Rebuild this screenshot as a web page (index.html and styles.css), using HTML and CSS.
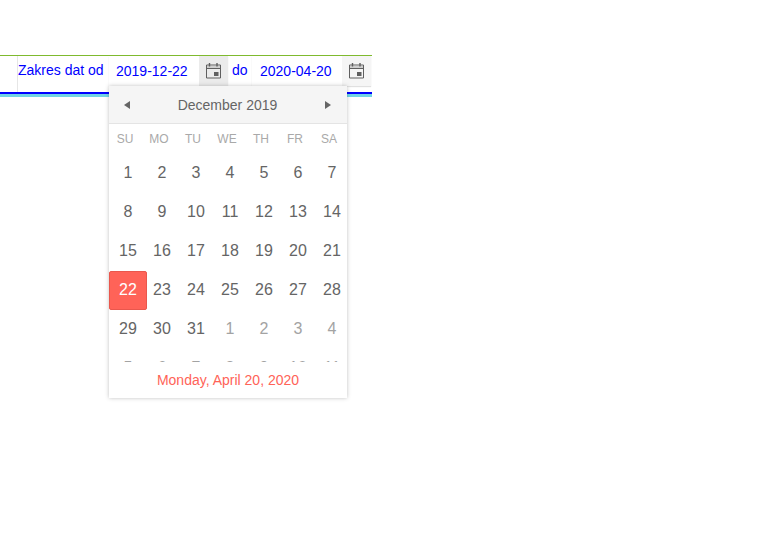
FILE: index.html
```html
<!DOCTYPE html>
<html lang="pl">
<head>
<meta charset="utf-8">
<title>Zakres dat</title>
<link rel="stylesheet" href="styles.css">
</head>
<body>
<div class="toolbar">
  <div class="spacer"></div>
  <span class="label first">Zakres dat od</span>
  <div class="field open">
    <span class="value">2019-12-22</span>
    <span class="icon-btn active">
      <svg class="cal" width="15" height="16" viewBox="0 0 15 16"><path d="M.5 2h14v13H.5z" fill="none" stroke="#5f5f5f"/><path d="M1 3h13v2H1z" fill="#cfcfcf"/><path d="M1 5.500h13" stroke="#5f5f5f"/><path d="M3.500 0v3.500M11 0v3.500" stroke="#5f5f5f" stroke-width="1.400"/><rect x="8" y="9" width="4.500" height="4" fill="#5f5f5f"/></svg>
    </span>
    <div class="popup">
      <div class="head">
        <span class="arrow left"></span>
        <span class="title">December 2019</span>
        <span class="arrow right"></span>
      </div>
      <div class="weekdays">
        <span>SU</span><span>MO</span><span>TU</span><span>WE</span><span>TH</span><span>FR</span><span>SA</span>
      </div>
      <div class="days-clip">
        <div class="days">
          <span>1</span><span>2</span><span>3</span><span>4</span><span>5</span><span>6</span><span>7</span>
          <span>8</span><span>9</span><span>10</span><span>11</span><span>12</span><span>13</span><span>14</span>
          <span>15</span><span>16</span><span>17</span><span>18</span><span>19</span><span>20</span><span>21</span>
          <span class="selected">22</span><span>23</span><span>24</span><span>25</span><span>26</span><span>27</span><span>28</span>
          <span>29</span><span>30</span><span>31</span><span class="other">1</span><span class="other">2</span><span class="other">3</span><span class="other">4</span>
          <span class="other">5</span><span class="other">6</span><span class="other">7</span><span class="other">8</span><span class="other">9</span><span class="other">10</span><span class="other">11</span>
        </div>
      </div>
      <div class="today">Monday, April 20, 2020</div>
    </div>
  </div>
  <span class="label second">do</span>
  <div class="field">
    <span class="value">2020-04-20</span>
    <span class="icon-btn">
      <svg class="cal" width="15" height="16" viewBox="0 0 15 16"><path d="M.5 2h14v13H.5z" fill="none" stroke="#5f5f5f"/><path d="M1 3h13v2H1z" fill="#cfcfcf"/><path d="M1 5.500h13" stroke="#5f5f5f"/><path d="M3.500 0v3.500M11 0v3.500" stroke="#5f5f5f" stroke-width="1.400"/><rect x="8" y="9" width="4.500" height="4" fill="#5f5f5f"/></svg>
    </span>
  </div>
</div>
</body>
</html>
```
FILE: styles.css
```css
*, *::before { box-sizing: border-box; }
html, body { margin: 0; padding: 0; background: #fff; }
html { height: 100%; }
body {
  min-height: 100%;
  padding-top: 55px;
  font-family: "Liberation Sans", Arial, sans-serif;
  font-size: 14px;
}
.toolbar {
  width: 372px;
  height: 42px;
  display: flex;
  align-items: flex-start;
  border-top: 1px solid #7fba2e;
  border-bottom: 3px solid #72d4e4;
  box-shadow: inset 0 -2px 0 #0000ff;
  color: #0000ff;
}
.spacer {
  width: 18px;
  height: 36px;
  border-right: 1px solid #e6e6e6;
  flex: none;
}
.label { line-height: 29px; flex: none; }
.label.first { width: 91px; }
.label.second { width: 24px; padding-left: 4px; }
.field {
  position: relative;
  width: 119px;
  height: 30px;
  display: flex;
  flex: none;
  background: #fff;
  box-shadow: 0 1px 1px rgba(0,0,0,.12);
}
.value {
  flex: 1;
  padding-left: 8px;
  line-height: 31px;
}
.field.open .value { padding-left: 7px; }
.icon-btn {
  width: 29px;
  height: 30px;
  background: #f5f5f5;
  display: flex;
  align-items: center;
  justify-content: center;
  padding-right: 1px;
}
.icon-btn.active { background: #ebebeb; }
.popup {
  position: absolute;
  top: 30px;
  left: 0;
  width: 238px;
  height: 312px;
  background: #fff;
  box-shadow: 0 0 4px rgba(0,0,0,.25);
  color: #656565;
  z-index: 5;
}
.head {
  height: 38px;
  background: #f5f5f5;
  border-bottom: 1px solid #e4e4e4;
  display: flex;
  align-items: center;
  justify-content: space-between;
  padding: 0 16px 0 15px;
}
.title { font-size: 14px; color: #656565; }
.arrow { width: 0; height: 0; border-top: 4px solid transparent; border-bottom: 4px solid transparent; }
.arrow.left { border-right: 6px solid #656565; }
.arrow.right { border-left: 6px solid #656565; }
.weekdays {
  display: grid;
  grid-template-columns: repeat(7, 34px);
  margin-left: -1px;
  height: 29px;
  align-items: center;
  font-size: 12px;
  color: #a9a9a9;
  text-align: center;
}
.days-clip { height: 209px; overflow: hidden; }
.days {
  display: grid;
  grid-template-columns: repeat(7, 34px);
  grid-auto-rows: 39px;
  padding-left: 2px;
  font-size: 16px;
  text-align: center;
}
.days span {
  position: relative;
  line-height: 39px;
  z-index: 1;
}
.days .other { color: #a3a3a3; }
.days .selected { color: #fff; }
.days .selected::before {
  content: "";
  position: absolute;
  left: -2px;
  top: 1px;
  width: 38px;
  height: 39px;
  background: #ff6358;
  border: 1px solid #e9574d;
  border-radius: 2px;
  z-index: -1;
}
.today {
  position: absolute;
  left: 0; right: 0; bottom: 8px;
  text-align: center;
  color: #ff6358;
  font-size: 14px;
  line-height: 20px;
  background: #fff;
}
```
